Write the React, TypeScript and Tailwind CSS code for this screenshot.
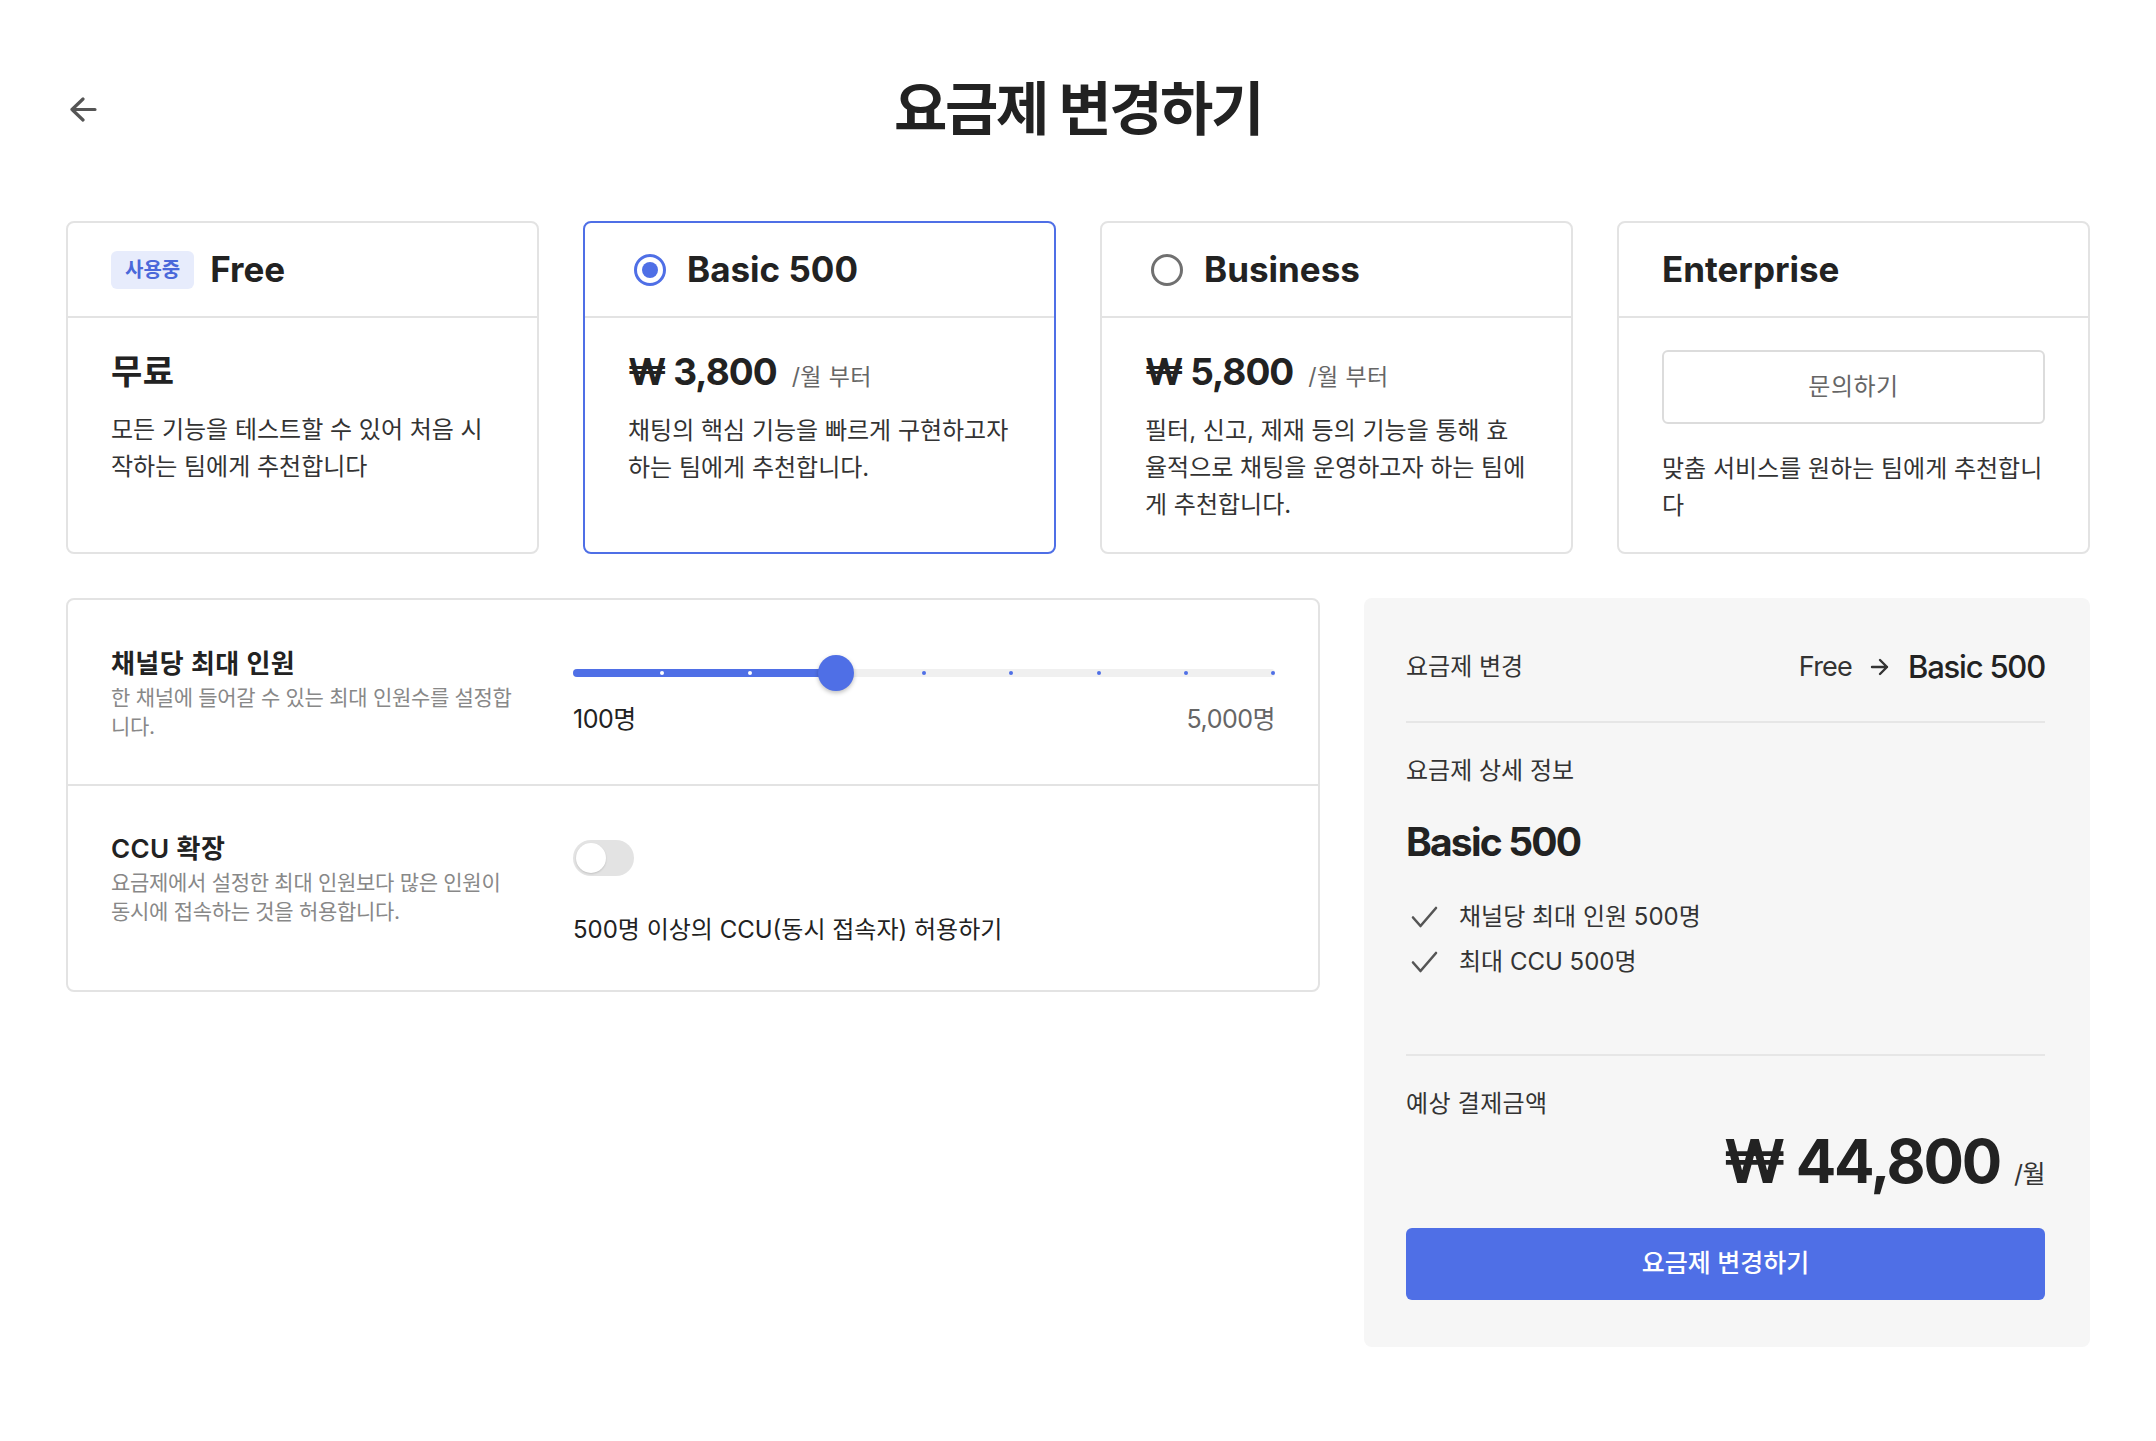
const FONT = "font-['Inter','Noto_Sans_CJK_KR',sans-serif]";

type Plan = {
  id: string;
  name: string;
  current?: boolean;
  selected?: boolean;
  radio?: boolean;
  price?: string;
  free?: string;
  contact?: boolean;
  desc: string[];
};

const plans: Plan[] = [
  { id: "free", name: "Free", current: true, free: "무료", desc: ["모든 기능을 테스트할 수 있어 처음 시", "작하는 팀에게 추천합니다"] },
  { id: "basic", name: "Basic 500", radio: true, selected: true, price: "₩ 3,800", desc: ["채팅의 핵심 기능을 빠르게 구현하고자", "하는 팀에게 추천합니다."] },
  { id: "business", name: "Business", radio: true, price: "₩ 5,800", desc: ["필터, 신고, 제재 등의 기능을 통해 효", "율적으로 채팅을 운영하고자 하는 팀에", "게 추천합니다."] },
  { id: "enterprise", name: "Enterprise", contact: true, desc: ["맞춤 서비스를 원하는 팀에게 추천합니", "다"] },
];

function Radio({ on }: { on?: boolean }) {
  if (on) {
    return (
      <span className="ml-[6px] flex h-[32px] w-[32px] shrink-0 items-center justify-center rounded-full border-[3px] border-[#4f6fe6]">
        <span className="h-[16px] w-[16px] rounded-full bg-[#4f6fe6]" />
      </span>
    );
  }
  return <span className="ml-[6px] h-[32px] w-[32px] shrink-0 rounded-full border-[3px] border-[#707070]" />;
}

// keep the original line breaks, one line per row
function Lines({ lines }: { lines: string[] }) {
  return (
    <>
      {lines.map((l, i) => (
        <span key={i} className="block whitespace-nowrap">
          {l}
        </span>
      ))}
    </>
  );
}

function PlanCard({ plan }: { plan: Plan }) {
  return (
    <div className={`flex flex-col rounded-[8px] border-2 bg-white ${plan.selected ? "border-[#4f6fe6]" : "border-[#e3e3e3]"}`}>
      <div className="flex h-[95px] items-center gap-[21px] border-b-2 border-[#e3e3e3] px-[43px]">
        {plan.current && (
          <span className="-mr-[5px] flex h-[38px] items-center rounded-[6px] bg-[#e7ecfc] px-[14px] text-[20px] font-semibold tracking-[0px] text-[#4a68da]">
            사용중
          </span>
        )}
        {plan.radio && <Radio on={plan.selected} />}
        <span className="text-[35px] font-bold tracking-[0px] text-[#222]">{plan.name}</span>
      </div>
      <div className="px-[43px] pt-[32px] pb-[28px]">
        {plan.free && <div className="text-[34px] font-bold leading-[44px] tracking-[0.5px] text-[#222]">{plan.free}</div>}
        {plan.price && (
          <div className="flex items-baseline gap-[15px]">
            <span className="text-[37px] font-bold leading-[44px] tracking-[-1px] text-[#222]">{plan.price}</span>
            <span className="text-[23px] tracking-[0.4px] text-[#666]">/월 부터</span>
          </div>
        )}
        {plan.contact && (
          <button className="flex h-[74px] w-full items-center justify-center rounded-[6px] border-2 border-[#dcdcdc] bg-white text-[24px] tracking-[0.5px] text-[#666]">
            문의하기
          </button>
        )}
        <p className={`${plan.contact ? "mt-[26px]" : "mt-[17px]"} text-[24px] leading-[37px] tracking-[0px] text-[#333]`}>
          <Lines lines={plan.desc} />
        </p>
      </div>
    </div>
  );
}

function Slider() {
  const ticks = [0, 1, 2, 3, 4, 5, 6, 7, 8];
  const step = 3;
  return (
    <div className="pt-[8px]">
      <div className="relative flex h-[36px] items-center">
        <div className="relative h-[8px] w-full rounded-full bg-[#f0f0f0]">
          <div className="h-full w-[37.5%] rounded-full bg-[#4f6fe6]" />
          <div className="absolute inset-0 flex items-center justify-between">
            {ticks.map((t) => (
              <span
                key={t}
                className={`h-[4px] w-[4px] rounded-full ${t === 0 || t === step ? "bg-transparent" : t < step ? "bg-white" : "bg-[#4f6fe6]"}`}
              />
            ))}
          </div>
        </div>
        <span className="absolute left-[37.5%] top-0 h-[36px] w-[36px] -translate-x-1/2 rounded-full bg-[#4f6fe6] shadow-[0_2px_4px_rgba(0,0,0,0.25)]" />
      </div>
      <div className="mt-[12px] flex justify-between text-[25px] leading-[32px] tracking-[-0.5px]">
        <span className="text-[#222]">100명</span>
        <span className="text-[#666]">5,000명</span>
      </div>
    </div>
  );
}

function Check() {
  return (
    <svg className="ml-[4px] shrink-0" width="28" height="24" viewBox="0 0 28 24" fill="none" stroke="#555" strokeWidth="2.6" strokeLinecap="round" strokeLinejoin="round">
      <path d="M3 12.5 10.5 21 26 3" />
    </svg>
  );
}

export default function App() {
  return (
    <div className={`min-h-screen w-full bg-white px-[66px] pt-[72px] pb-[60px] text-[#222] ${FONT}`}>
      <header className="grid h-[74px] grid-cols-[1fr_auto_1fr] items-center">
        <button className="ml-[4px] flex h-[40px] w-[40px] items-center" aria-label="back">
          <svg width="27" height="25" viewBox="0 0 27 25" fill="none" stroke="#555" strokeWidth="3.2" strokeLinecap="round" strokeLinejoin="round">
            <path d="M13 2 2 12.5 13 23M2 12.5h23" />
          </svg>
        </button>
        <h1 className="text-[58px] font-bold leading-[74px] tracking-[-2.4px] text-[#222]">요금제 변경하기</h1>
        <div />
      </header>

      <div className="mt-[75px] grid grid-cols-4 gap-[44px]">
        {plans.map((p) => (
          <PlanCard key={p.id} plan={p} />
        ))}
      </div>

      <div className="mt-[44px] flex items-start gap-[44px]">
        <div className="flex-1 rounded-[8px] border-2 border-[#e3e3e3] bg-white">
          <div className="flex gap-[52px] px-[43px] pt-[47px] pb-[43px]">
            <div className="w-[410px] shrink-0">
              <div className="text-[26px] font-semibold leading-[34px] tracking-[0.4px] text-[#222]">채널당 최대 인원</div>
              <p className="mt-[2px] text-[21px] leading-[29px] tracking-[-0.3px] text-[#888]">
                <Lines lines={["한 채널에 들어갈 수 있는 최대 인원수를 설정합", "니다."]} />
              </p>
            </div>
            <div className="flex-1">
              <Slider />
            </div>
          </div>
          <div className="flex gap-[52px] border-t-2 border-[#e3e3e3] px-[43px] pt-[46px] pb-[44px]">
            <div className="w-[410px] shrink-0">
              <div className="text-[26px] font-semibold leading-[34px] tracking-[0.4px] text-[#222]">CCU 확장</div>
              <p className="mt-[2px] text-[21px] leading-[29px] tracking-[-0.3px] text-[#888]">
                <Lines lines={["요금제에서 설정한 최대 인원보다 많은 인원이", "동시에 접속하는 것을 허용합니다."]} />
              </p>
            </div>
            <div className="flex-1 pt-[8px]">
              <span className="flex h-[36px] w-[61px] items-center rounded-full bg-[#e3e3e3] px-[3px]">
                <span className="h-[30px] w-[30px] rounded-full bg-white shadow-[0_1px_2px_rgba(0,0,0,0.15)]" />
              </span>
              <p className="mt-[38px] text-[24px] leading-[32px] tracking-[0px] text-[#222]">500명 이상의 CCU(동시 접속자) 허용하기</p>
            </div>
          </div>
        </div>

        <aside className="w-[726px] shrink-0 rounded-[8px] bg-[#f6f6f6] pl-[42px] pr-[45px] pt-[46px] pb-[47px]">
          <div className="flex items-center justify-between border-b-2 border-[#e6e6e6] pb-[30px]">
            <span className="text-[24px] leading-[44px] tracking-[0px] text-[#333]">요금제 변경</span>
            <div className="flex items-center gap-[18px]">
              <span className="text-[27px] tracking-[-0.8px] text-[#333]">Free</span>
              <svg width="20" height="18" viewBox="0 0 20 18" fill="none" stroke="#333" strokeWidth="2.4" strokeLinecap="round" strokeLinejoin="round">
                <path d="M2 9h15M10 2l7 7-7 7" />
              </svg>
              <span className="text-[31px] font-medium tracking-[-1.2px] text-[#222]">Basic 500</span>
            </div>
          </div>

          <div className="pt-[32px]">
            <p className="text-[24px] leading-[32px] tracking-[0px] text-[#333]">요금제 상세 정보</p>
            <p className="mt-[31px] text-[39px] font-bold leading-[48px] tracking-[-1.8px] text-[#222]">Basic 500</p>
            <ul className="mt-[29px]">
              {["채널당 최대 인원 500명", "최대 CCU 500명"].map((t) => (
                <li key={t} className="flex h-[45px] items-center gap-[21px] text-[24px] tracking-[0px] text-[#333]">
                  <Check />
                  {t}
                </li>
              ))}
            </ul>
          </div>

          <div className="mt-[69px] border-t-2 border-[#e6e6e6] pt-[32px]">
            <p className="text-[24px] leading-[32px] tracking-[0.3px] text-[#333]">예상 결제금액</p>
            <div className="mt-[4px] flex items-baseline justify-end gap-[14px]">
              <span className="text-[60px] font-bold leading-[74px] tracking-[-2.2px] text-[#222]">₩ 44,800</span>
              <span className="text-[25px] tracking-[-0.5px] text-[#333]">/월</span>
            </div>
            <button className="mt-[30px] flex h-[72px] w-full items-center justify-center rounded-[6px] bg-[#4f6fe6] text-[25px] font-medium tracking-[0px] text-white">
              요금제 변경하기
            </button>
          </div>
        </aside>
      </div>
    </div>
  );
}
